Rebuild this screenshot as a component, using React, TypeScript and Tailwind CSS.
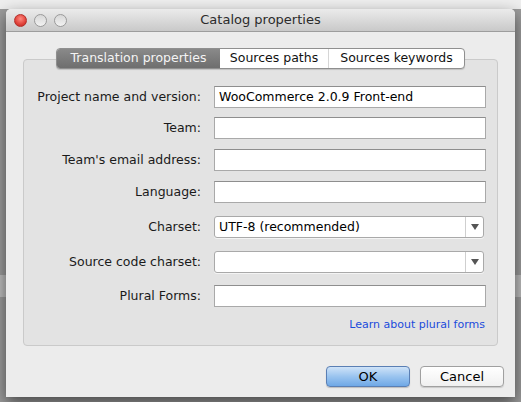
import React from 'react';

const font = { fontFamily: '"DejaVu Sans", "Liberation Sans", sans-serif' };

const rows: { label: string; value?: string; select?: boolean; mt: string }[] = [
  { label: 'Project name and version:', value: 'WooCommerce 2.0.9 Front-end', mt: 'mt-0' },
  { label: 'Team:', mt: 'mt-[9px]' },
  { label: "Team's email address:", mt: 'mt-[10px]' },
  { label: 'Language:', mt: 'mt-[10px]' },
  { label: 'Charset:', value: 'UTF-8 (recommended)', select: true, mt: 'mt-[13px]' },
  { label: 'Source code charset:', select: true, mt: 'mt-[13px]' },
  { label: 'Plural Forms:', mt: 'mt-[12px]' },
];

const Field = ({ value, select }: { value?: string; select?: boolean }) => {
  if (select) {
    return (
      <div className="flex h-[22px] w-[270px] rounded-[3px] border border-[#a9a9a9] bg-white shadow-[0_1px_0_rgba(255,255,255,0.6)]">
        <div className="flex flex-1 items-center pl-[4px] text-[12.5px] text-black">{value}</div>
        <div className="flex w-[18px] items-center justify-center border-l border-[#cfcfcf]">
          <svg width="8" height="6" viewBox="0 0 8 6">
            <path d="M0 0 L8 0 L4 6 Z" fill="#555" />
          </svg>
        </div>
      </div>
    );
  }
  return (
    <div className="flex h-[22px] w-[272px] items-center border border-[#a9a9a9] border-t-[#8e8e8e] bg-white pl-[4px] text-[12.5px] text-black">
      {value}
    </div>
  );
};

export default function App() {
  return (
    <div className="relative h-[402px] w-[521px] overflow-hidden bg-[#9c9c9c]" style={font}>
      <div className="h-[9px] bg-[#eeeeee]" />
      <div className="mt-[266px] h-[22px] bg-[#bdbdbd]" />
      <div className="absolute left-[6px] top-[9px] w-[509px] rounded-t-[5px] bg-[#ececec] shadow-[0_6px_16px_rgba(0,0,0,0.55)]">
        {/* title bar */}
        <div className="relative flex h-[23px] items-center rounded-t-[5px] border-b border-[#9d9d9d] bg-gradient-to-b from-[#ebebeb] to-[#c9c9c9]">
          <div className="flex gap-[7px] pl-[8px]">
            <div className="h-[13px] w-[13px] rounded-full border border-[#b32f2a] bg-[radial-gradient(circle_at_50%_35%,#ff8a80,#e0423a_60%,#b8231c)]" />
            <div className="h-[13px] w-[13px] rounded-full border border-[#9a9a9a] bg-gradient-to-b from-[#d7d7d7] to-[#f2f2f2]" />
            <div className="h-[13px] w-[13px] rounded-full border border-[#9a9a9a] bg-gradient-to-b from-[#d7d7d7] to-[#f2f2f2]" />
          </div>
          <div className="absolute inset-0 flex items-center justify-center text-[13px] text-[#2b2b2b]">
            Catalog properties
          </div>
        </div>

        {/* content */}
        <div className="px-[17px] pt-[16px]">
          <div className="relative">
            <div className="relative z-10 mx-auto flex h-[21px] w-[409px] overflow-hidden rounded-[4px] border border-[#8f8f8f] bg-white text-[12.5px] shadow-[0_1px_1px_rgba(0,0,0,0.15)]">
              <div className="flex w-[163px] items-center justify-center bg-gradient-to-b from-[#8a8a8a] to-[#6e6e6e] text-[#f4f4f4]">
                Translation properties
              </div>
              <div className="flex w-[109px] items-center justify-center border-r border-[#d6d6d6] text-[#111]">
                Sources paths
              </div>
              <div className="flex flex-1 items-center justify-center text-[#111]">Sources keywords</div>
            </div>
            <div className="-mt-[10px] h-[287px] rounded-[4px] border border-[#cacaca] bg-[#e3e3e3] pt-[26px]">
              <div className="flex flex-col text-[12.5px] text-[#1a1a1a]">
                {rows.map((r) => (
                  <div key={r.label} className={`flex items-center ${r.mt}`}>
                    <div className="w-[190px] pr-[13px] text-right">{r.label}</div>
                    <Field value={r.value} select={r.select} />
                  </div>
                ))}
              </div>
              <div className="mt-[10px] pr-[12px] text-right text-[11px] text-[#1a4bdc]">Learn about plural forms</div>
            </div>
          </div>

          <div className="flex justify-end gap-[10px] pb-[10px] pt-[20px]">
            <div className="flex h-[21px] w-[84px] items-center justify-center rounded-[4px] border border-[#5a7fb4] bg-gradient-to-b from-[#cfe3f8] via-[#9ac4ef] to-[#6fa8e6] text-[13px] text-black shadow-[0_1px_1px_rgba(0,0,0,0.2)]">
              OK
            </div>
            <div className="-mr-[6px] flex h-[21px] w-[84px] items-center justify-center rounded-[4px] border border-[#a0a0a0] bg-gradient-to-b from-white to-[#f0f0f0] text-[13px] text-black shadow-[0_1px_1px_rgba(0,0,0,0.15)]">
              Cancel
            </div>
          </div>
        </div>
      </div>
    </div>
  );
}
